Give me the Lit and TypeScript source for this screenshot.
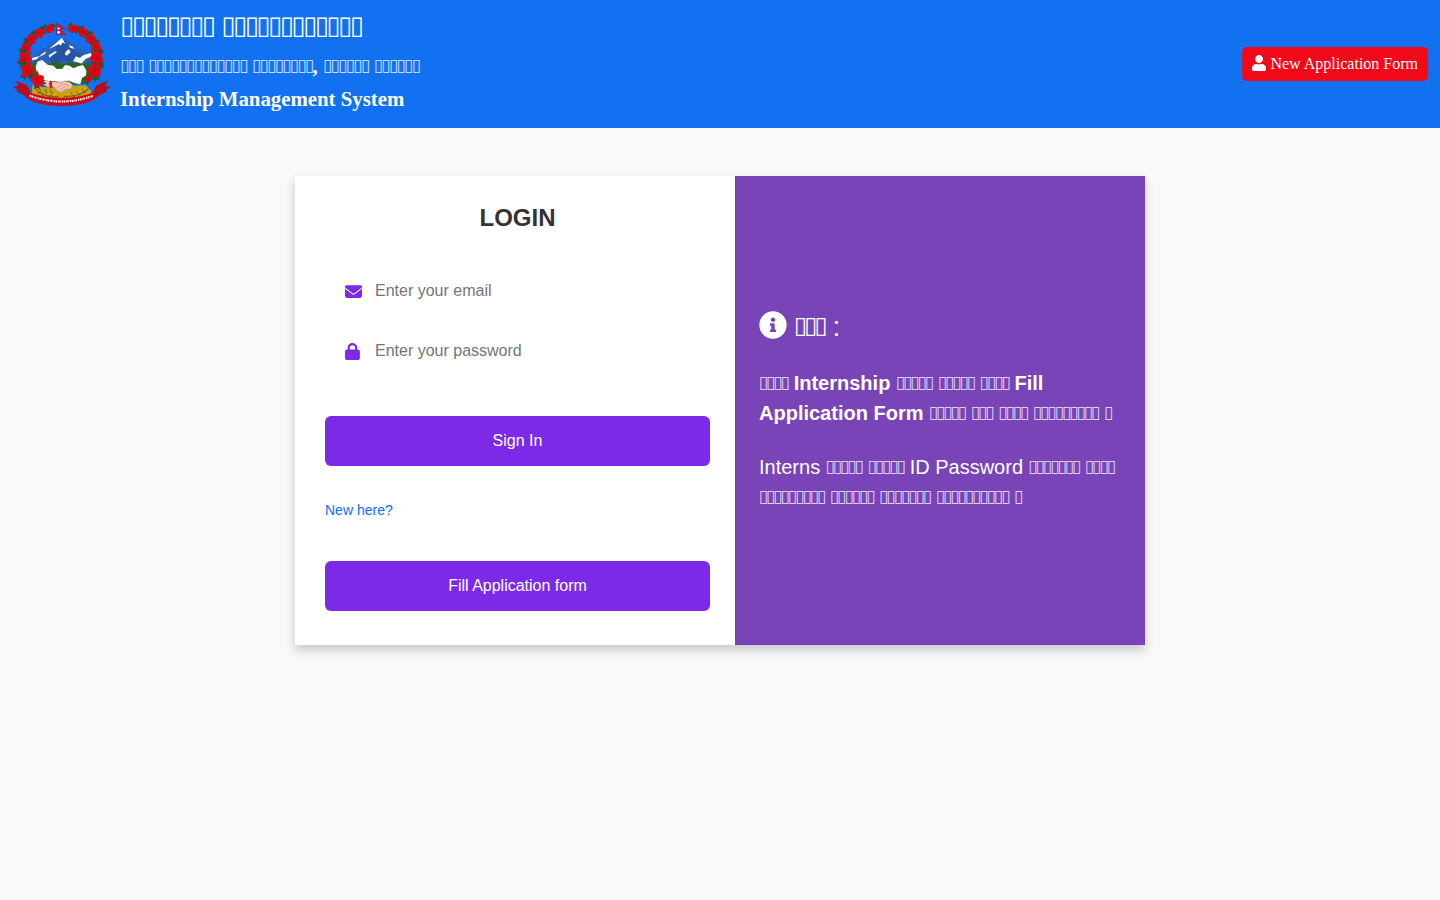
import { LitElement, html, css, svg } from "lit";
import { customElement } from "lit/decorators.js";

/** One rhododendron bloom with its leaves: x, y, radius, leaf rotation. */
const BLOOMS: Array<[number, number, number, number]> = [
  [148, 83, 12, -15],
  [118, 96, 13, -35],
  [94, 115, 14, -50],
  [78, 141, 14, -65],
  [75, 173, 17, -80],
  [82, 208, 18, -100],
  [113, 237, 17, -125],
  [219, 83, 12, 15],
  [249, 94, 13, 35],
  [272, 114, 14, 50],
  [287, 139, 14, 65],
  [290, 171, 17, 80],
  [284, 208, 18, 100],
  [265, 233, 10, 130],
];

/** Turns a pattern of word lengths ("3 13 8") into words of placeholder boxes. */
const boxes = (pattern: string) =>
  pattern
    .split(" ")
    .map((n, i) => html`${i ? " " : ""}<span class="boxes">${"\u25AF".repeat(Number(n))}</span>`);

@customElement("nepal-emblem")
export class NepalEmblem extends LitElement {
  static styles = css`
    :host { display: block; width: 100px; height: 87px; }
    .art { display: block; width: 100%; height: 100%; }
  `;

  private bloom([x, y, r, a]: [number, number, number, number]) {
    return svg`
      <g transform="translate(${x} ${y}) rotate(${a}) scale(${r / 18})">
        <path fill="#0d5c3a" d="M-14 -4L-30 -14L-20 -15L-17 -26L-6 -16L17 -16L24 -22L26 -12L33 -5L18 2L24 18L12 12L-12 12L-26 17L-20 5L-31 2Z"/>
        <g fill="#e00812">
          <circle cx="-9" cy="-9" r="9.500"/><circle cx="8" cy="-10" r="9.500"/>
          <circle cx="13" cy="4" r="9"/><circle cx="-1" cy="12" r="9"/>
          <circle cx="-13" cy="5" r="8.500"/><circle r="10"/>
        </g>
        <path fill="none" stroke="#8d0b1c" stroke-width="1.500" d="M-8 -10Q-2 -5 0 1Q6 -7 10 -7M0 1Q8 3 12 8M0 1Q-8 0 -14 5"/>
      </g>`;
  }

  render() {
    return html`
      <svg class="art" viewBox="36 60 300 261" role="img" aria-label="Emblem of Nepal">
        <path fill="#2b61b9" d="M88 171L184 108L258 153L282 159L268 218L96 215Z"/>
        <path fill="#2456a5" d="M184 110L215 142L246 160L218 184L190 178L165 188L150 180Z"/>
        <path fill="#fff" d="M186 110L196 130L188 124L182 134L177 129L160 138L148 143L162 131ZM146 163L166 151L171 154L158 162L148 170ZM124 160L139 151L135 159L118 168ZM205 133L217 136L224 143L212 141ZM198 151L207 145L212 153L201 164L194 160ZM96 171L119 165L110 175L97 178ZM219 181L228 166L239 171L251 162L275 155L273 167L256 174L244 188L233 184Z"/>
        <path fill="#2b6320" d="M89 202L108 178L143 190L166 181L190 190L209 184L252 189L268 180L272 226L250 249L125 251L96 225Z"/>
        <path fill="#c9a213" d="M97 253Q135 262 162 256L257 253L273 270L273 288Q184 316 95 288Z"/>
        <path fill="none" stroke="#8a5a0c" stroke-width="3.500" d="M105 262Q132 291 176 286M265 264Q235 289 191 286M112 276L130 274M126 284L142 275M145 288L158 278M224 288L213 276M240 284L230 270M256 276L245 263M119 264L123 276M135 264L141 278M151 267L158 281"/>
        <path fill="none" stroke="#e1bb35" stroke-width="2" d="M110 263Q138 285 171 281M260 260Q232 284 197 281"/>
        <path fill="#fff" d="M112 182L126 177L143 191L160 194L170 204L187 203L195 192L209 194L220 202L234 196L249 192L259 208L258 224L246 230L241 250L223 246L207 239L184 240L151 241L133 238L111 216L107 198Z"/>
        <path fill="#f1c4b8" d="M128 240L150 240L162 243L178 239L207 242L218 252L212 262L198 266L182 274L169 266L164 258L143 257L128 250Z"/>
        <path fill="none" stroke="#c98f7f" stroke-width="2" d="M169 262L187 252M176 269L195 257M184 273L204 261M168 244Q188 245 208 255"/>
        <path fill="none" stroke="#d91422" stroke-width="8" d="M153 240Q149 250 154 261"/>
        ${BLOOMS.map((b) => this.bloom(b))}
        <path fill="#b90d18" d="M37 257L55 255L47 239L81 253L92 274L82 290L67 280L51 273L52 266ZM333 257L315 255L323 239L289 253L278 274L288 290L303 280L319 273L318 266Z"/>
        <path fill="#c90c18" d="M86 274Q184 307 284 274L292 288Q266 313 184 315Q103 313 77 289Z"/>
        <path fill="none" stroke="#fff" stroke-width="6" stroke-dasharray="4 1.500 6 2 2 1 5 3" d="M89 284Q184 319 281 284"/>
        <path fill="none" stroke="#c90c18" stroke-width="1.500" stroke-dasharray="3 3" d="M89 286Q184 321 281 286"/>
        <path fill="#dc143c" stroke="#27327d" stroke-width="1.500" d="M169 66L197 83L179 84L199 101L169 101Z"/>
        <path fill="#fff" d="M172 79Q176 83 180 79Q179 86 175 86Q172 85 172 79Z"/>
        <circle cx="176" cy="94" r="4" fill="#fff"/>
      </svg>`;
  }
}

@customElement("app-root")
export class AppRoot extends LitElement {
  static styles = css`
    :host {
      display: block;
      min-height: 100vh;
      background: #f9f9f9;
      font: 16px/1.5 "Liberation Sans", sans-serif;
      color: #333;
    }
    * { box-sizing: border-box; }
    .boxes {
      font: 400 0.84em/0 "DejaVu Sans", sans-serif;
      letter-spacing: -0.1163em;
      vertical-align: 0.11em;
      white-space: nowrap;
    }
    .name .boxes { font-size: 0.8em; letter-spacing: -0.0945em; vertical-align: 0.15em; }
    .office .boxes, .para .boxes { opacity: 0.75; }
    .banner {
      display: flex;
      align-items: center;
      height: 128px;
      padding: 0 12px;
      background: #1271f1;
      color: #fff;
      font-family: "Liberation Serif", serif;
    }
    .titles { display: flex; flex-direction: column; gap: 8px; margin: 0 auto 8px 8px; }
    .name, .office { margin: 0; line-height: 1.2; font-weight: 700; }
    .name { font-size: 32px; font-weight: 500; }
    .office { font-size: 20.8px; }
    .apply {
      display: flex;
      align-items: center;
      gap: 4px;
      height: 34px;
      padding: 0 10px;
      border-radius: 5px;
      background: #f00a19;
      color: #fff;
      text-decoration: none;
    }
    .apply svg { width: 14px; height: 16px; margin-bottom: 2px; }
    .card {
      display: grid;
      grid-template-columns: 440px 410px;
      width: 850px;
      height: 469px;
      margin: 48px auto 0;
      background: #fff;
      box-shadow: 0 5px 10px rgba(0, 0, 0, 0.2);
    }
    .form { display: flex; flex-direction: column; padding: 24px 25px 0 30px; }
    .login { margin: 0 0 30px; font-size: 24px; line-height: 36px; text-align: center; }
    .field { display: flex; align-items: center; height: 50px; margin-bottom: 10px; padding-left: 20px; }
    .slot { width: 30px; height: 17px; color: #7d2ae8; }
    .slot svg { display: block; height: 17px; }
    .input {
      flex: 1;
      min-width: 0;
      padding: 0;
      border: 0;
      outline: 0;
      background: none;
      font: 16px "Liberation Sans", sans-serif;
    }
    .input::placeholder { color: #757575; }
    .button {
      height: 50px;
      border: 0;
      border-radius: 6px;
      background: #7d2ae8;
      color: #fff;
      font: 16px "Liberation Sans", sans-serif;
    }
    .first { margin-top: 30px; }
    .hint { margin: 34px 0 40px; font-size: 14px; line-height: 21px; color: #0d6efd; }
    .note {
      display: flex;
      flex-direction: column;
      justify-content: center;
      padding: 0 24px;
      background: #7844b7;
      color: #fff;
      font-size: 20px;
      line-height: 30px;
    }
    .title { display: flex; align-items: center; gap: 7px; margin: 0 0 24px; font-size: 28px; font-weight: 500; line-height: 34px; }
    .title svg { width: 28px; height: 28px; margin-bottom: 3px; }
    .para { margin: 0 0 24px; }
    .para:last-child { margin: 0; }
  `;

  render() {
    return html`
      <header class="banner">
        <nepal-emblem></nepal-emblem>
        <div class="titles">
          <h1 class="name">${boxes("8 12")}</h1>
          <h4 class="office">${boxes("3 13 8")}, ${boxes("6 6")}</h4>
          <h4 class="office">Internship Management System</h4>
        </div>
        <a class="apply">
          <svg viewBox="0 0 448 512" fill="currentColor"><path d="M224 256c70.700 0 128-57.300 128-128S294.700 0 224 0 96 57.300 96 128s57.300 128 128 128zm89.600 32h-16.700c-22.200 10.200-46.900 16-72.900 16s-50.600-5.800-72.900-16h-16.700C60.200 288 0 348.200 0 422.400V464c0 26.500 21.500 48 48 48h352c26.500 0 48-21.500 48-48v-41.600c0-74.200-60.200-134.400-134.400-134.400z"/></svg>
          <span>New Application Form</span>
        </a>
      </header>
      <main class="card">
        <section class="form">
          <h2 class="login">LOGIN</h2>
          <label class="field">
            <span class="slot"><svg viewBox="0 0 512 512" fill="currentColor"><path d="M48 64C21.500 64 0 85.500 0 112c0 15.100 7.100 29.300 19.200 38.400L236.800 313.600c11.400 8.500 27 8.500 38.400 0L492.800 150.400c12.100-9.100 19.200-23.300 19.200-38.400 0-26.500-21.500-48-48-48H48zM0 176V384c0 35.300 28.700 64 64 64H448c35.300 0 64-28.700 64-64V176L294.400 339.200c-22.800 17.100-54 17.100-76.800 0L0 176z"/></svg></span>
            <input class="input" type="text" placeholder="Enter your email" />
          </label>
          <label class="field">
            <span class="slot"><svg viewBox="0 0 448 512" fill="currentColor"><path d="M144 144v48H304V144c0-44.200-35.800-80-80-80s-80 35.800-80 80zM80 192V144C80 64.500 144.500 0 224 0s144 64.500 144 144v48h16c35.300 0 64 28.700 64 64V448c0 35.300-28.700 64-64 64H64c-35.300 0-64-28.700-64-64V256c0-35.300 28.700-64 64-64H80z"/></svg></span>
            <input class="input" type="password" placeholder="Enter your password" />
          </label>
          <button class="button first">Sign In</button>
          <div class="hint">New here?</div>
          <button class="button">Fill Application form</button>
        </section>
        <aside class="note">
          <h3 class="title">
            <svg viewBox="0 0 512 512" fill="currentColor"><path fill-rule="evenodd" d="M256 6a250 250 0 1 0 0 500a250 250 0 1 0 0-500zm0 112c23.200 0 42 18.800 42 42s-18.800 42-42 42-42-18.800-42-42 18.800-42 42-42zm56 254c0 6.600-5.400 12-12 12h-88c-6.600 0-12-5.400-12-12v-24c0-6.600 5.400-12 12-12h12v-64h-12c-6.600 0-12-5.400-12-12v-24c0-6.600 5.400-12 12-12h64c6.600 0 12 5.400 12 12v100h12c6.600 0 12 5.400 12 12v24z"/></svg>
            <span>${boxes("3")} :</span>
          </h3>
          <p class="para"><b>${boxes("4")} Internship ${boxes("5 5 4")} Fill Application Form ${boxes("5 3 4 9 1")}</b></p>
          <p class="para">Interns ${boxes("5 5")} ID Password ${boxes("7 4 9 6 7 10 1")}</p>
        </aside>
      </main>
    `;
  }
}
